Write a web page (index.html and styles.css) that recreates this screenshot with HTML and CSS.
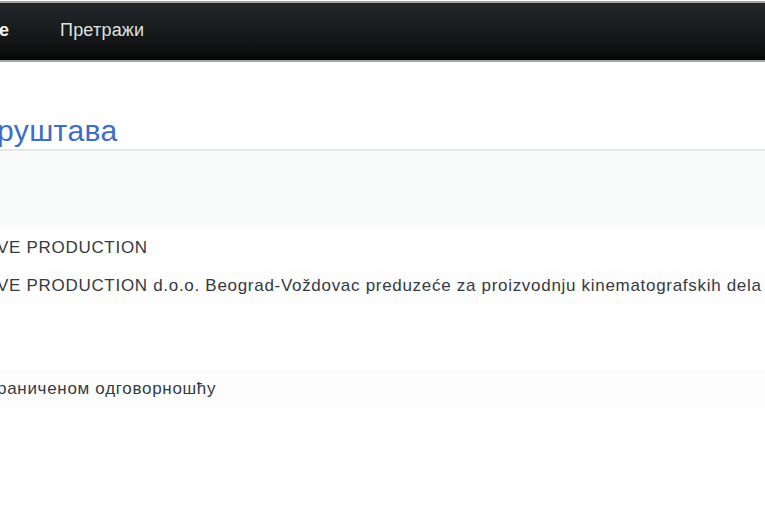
FILE: index.html
```html
<!DOCTYPE html>
<html lang="sr">
<head>
  <meta charset="UTF-8">
  <meta name="viewport" content="width=device-width, initial-scale=1.0">
  <title>Претрага друштава</title>
  <link rel="stylesheet" href="styles.css">
</head>
<body>
  <!-- Top navigation bar -->
  <nav class="navbar">
    <span class="brand">е</span>
    <a class="nav-link" href="#">Претражи</a>
  </nav>

  <main class="page">
    <h2 class="page-title">руштава</h2>

    <!-- Company details -->
    <div class="details">
      <div class="row row-tall"></div>
      <div class="row"><span class="value">VE PRODUCTION</span></div>
      <div class="row"><span class="value">VE PRODUCTION d.o.o. Beograd-Voždovac preduzeće za proizvodnju kinematografskih dela</span></div>
      <div class="row row-empty"></div>
      <div class="row"><span class="value">раниченом одговорношћу</span></div>
      <div class="row row-empty"></div>
    </div>
  </main>
</body>
</html>
```

FILE: styles.css
```css
body {
  margin: 0;
  padding-top: 1px;
  font-family: "Liberation Sans", Arial, sans-serif;
  background: #fff;
  color: #333;
  overflow: hidden;
}

/* Dark top bar */
.navbar {
  display: flex;
  align-items: center;
  gap: 51px;
  padding-bottom: 3px;
  box-sizing: border-box;
  height: 61px;
  border-top: 2px solid #a3a5a6;
  border-bottom: 2px solid #a3a5a6;
  background: linear-gradient(#24282a, #121415 70%, #070808);
}

.brand {
  font-size: 18px;
  font-weight: bold;
  color: #f2f2f2;
  margin-left: -1px;
}

.nav-link {
  font-size: 18px;
  letter-spacing: 0.2px;
  color: #dfe1e1;
  text-decoration: none;
}

.page {
  margin-left: -3px;
}

/* Section heading */
.page-title {
  margin: 0;
  padding: 52px 0 0;
  height: 35px;
  font-size: 30px;
  font-weight: normal;
  letter-spacing: 0.4px;
  line-height: 34px;
  color: #3b6ec6;
  border-bottom: 2px solid #e4e8ea;
}

.details {
  display: flex;
  flex-direction: column;
}

.row {
  height: 38px;
  display: flex;
  align-items: center;
  font-size: 17px;
  letter-spacing: 0.7px;
}

.row:nth-child(odd) {
  background: #fdfdfd;
}

.row-tall {
  height: 78px;
  background: #f9fafa !important;
}

.row-empty {
  height: 65px;
}

.value {
  white-space: nowrap;
  color: #363a42;
}
```
